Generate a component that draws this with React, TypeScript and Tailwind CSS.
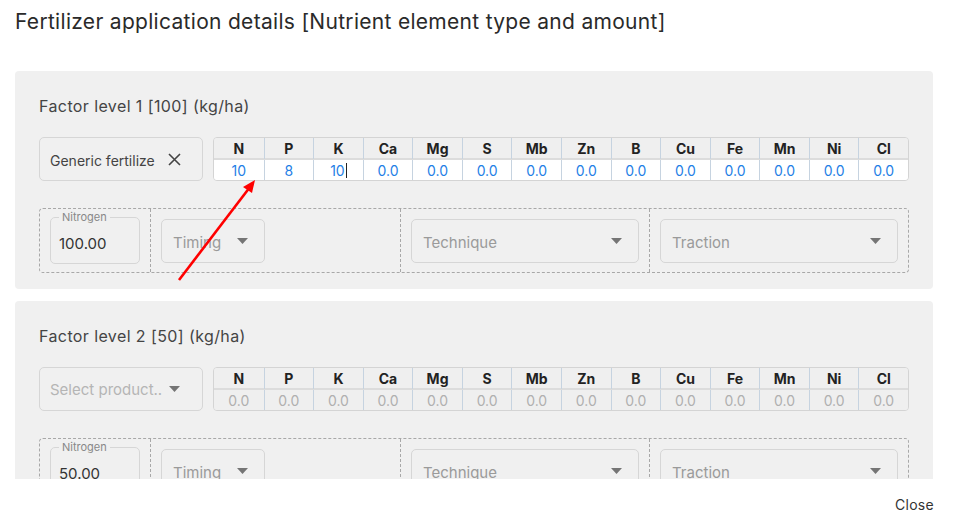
import React from 'react';

const ELEMENTS = ['N', 'P', 'K', 'Ca', 'Mg', 'S', 'Mb', 'Zn', 'B', 'Cu', 'Fe', 'Mn', 'Ni', 'Cl'];

const Caret: React.FC = () => (
  <svg width="11" height="6" viewBox="0 0 11 6" className="shrink-0">
    <path d="M0 0h11L5.5 6z" fill="#757575" />
  </svg>
);

interface SelectProps {
  label: string;
  className?: string;
}

const Select: React.FC<SelectProps> = ({ label, className = '' }) => (
  <div className={`h-[44px] flex items-center justify-between pl-[11px] pr-[16px] border border-[#d6d6d6] rounded-[5px] ${className}`}>
    <span className="text-[15px] text-[#9a9a9a] pt-[4px]">{label}</span>
    <Caret />
  </div>
);

interface NutrientTableProps {
  values: string[];
  disabled?: boolean;
}

const NutrientTable: React.FC<NutrientTableProps> = ({ values, disabled }) => (
  <div className="flex-1 h-[44px] border border-[#d4d4d4] rounded-[4px] overflow-hidden flex flex-col">
    <div className="grid grid-cols-[repeat(14,minmax(0,1fr))] h-[22px] border-b-2 border-[#dcdcdc] bg-[#efefef]">
      {ELEMENTS.map((el, i) => (
        <div
          key={el}
          className={`flex items-center justify-center text-[14px] font-bold text-[#222] ${i > 0 ? 'border-l border-[#c6d3e0]' : ''}`}
        >
          {el}
        </div>
      ))}
    </div>
    <div className={`grid grid-cols-[repeat(14,minmax(0,1fr))] flex-1 ${disabled ? 'bg-[#efefef]' : 'bg-white'}`}>
      {values.map((v, i) => (
        <div
          key={i}
          className={`flex items-center justify-center text-[14px] ${disabled ? 'text-[#b0b0b0]' : 'text-[#1f7fe6]'} ${i > 0 ? 'border-l border-[#c6d3e0]' : ''}`}
        >
          {v}
          {!disabled && i === 2 && <span className="w-px h-[15px] bg-[#222] ml-px" />}
        </div>
      ))}
    </div>
  </div>
);

interface FactorCardProps {
  title: string;
  product?: string;
  values: string[];
  nitrogen: string;
}

const FactorCard: React.FC<FactorCardProps> = ({ title, product, values, nitrogen }) => (
  <div className="bg-[#f0f0f0] rounded-[4px] px-[24px] pt-[24px] pb-[16px] shrink-0">
    <div className="text-[16px] leading-[22px] tracking-[0.4px] text-[#444]">{title}</div>

    <div className="flex gap-[10px] mt-[20px]">
      {product ? (
        <div className="w-[164px] h-[44px] flex items-center justify-between pl-[10px] pr-[21px] border border-[#d6d6d6] rounded-[5px]">
          <span className="text-[14px] text-[#444] whitespace-nowrap pt-[2px]">{product}</span>
          <svg width="13" height="13" viewBox="0 0 13 13">
            <path d="M1 1l11 11M12 1L1 12" stroke="#444" strokeWidth="1.6" />
          </svg>
        </div>
      ) : (
        <div className="w-[164px] h-[44px] flex items-center justify-between pl-[10px] pr-[22px] border border-[#d6d6d6] rounded-[5px]">
          <span className="text-[15px] text-[#b5b5b5] whitespace-nowrap pt-[2px]">Select product..</span>
          <Caret />
        </div>
      )}
      <NutrientTable values={values} disabled={!product} />
    </div>

    <div className="mt-[27px] h-[65px] border border-dashed border-[#a8a8a8] rounded-[4px] grid grid-cols-[110px_250px_249px_1fr]">
      <div className="px-[10px] pt-[3px]">
        <fieldset className="h-[52px] border border-[#d6d6d6] rounded-[5px] px-[8px]">
          <legend className="text-[11px] leading-[11px] text-[#888] px-[3px]">Nitrogen</legend>
          <div className="text-[15px] text-[#333] pt-[10px]">{nitrogen}</div>
        </fieldset>
      </div>
      <div className="border-l border-dashed border-[#a8a8a8] px-[10px] pt-[10px]">
        <Select label="Timing" className="w-[104px]" />
      </div>
      <div className="border-l border-dashed border-[#a8a8a8] px-[10px] pt-[10px]">
        <Select label="Technique" />
      </div>
      <div className="border-l border-dashed border-[#a8a8a8] px-[10px] pt-[10px]">
        <Select label="Traction" />
      </div>
    </div>
  </div>
);

const empty = ELEMENTS.map(() => '0.0');

const App: React.FC = () => {
  return (
    <div className="w-[954px] h-[518px] bg-white flex flex-col relative overflow-hidden font-['Inter',sans-serif]">
      <div className="h-[44px] flex items-center px-[15px] text-[21px] tracking-[0.3px] text-[#2a2a2a] shrink-0">
        Fertilizer application details [Nutrient element type and amount]
      </div>

      <div className="flex-1 overflow-hidden pl-[15px] pr-[21px] pt-[27px] flex flex-col gap-[12px]">
        <FactorCard
          title="Factor level 1 [100] (kg/ha)"
          product="Generic fertilize"
          values={['10', '8', '10', ...empty.slice(3)]}
          nitrogen="100.00"
        />
        <FactorCard title="Factor level 2 [50] (kg/ha)" values={empty} nitrogen="50.00" />
      </div>

      <div className="h-[39px] shrink-0 bg-white flex justify-end items-start pt-[15px] pr-[20px]">
        <button className="text-[14px] tracking-[0.3px] text-[#333]">Close</button>
      </div>

      {/* annotation arrow */}
      <svg className="absolute left-0 top-0 pointer-events-none" width="954" height="518">
        <line x1="179" y1="280" x2="250" y2="187" stroke="#f00" strokeWidth="2.6" />
        <path d="M255 180l-12 7 9 6z" fill="#f00" />
      </svg>
    </div>
  );
};

export default App;
